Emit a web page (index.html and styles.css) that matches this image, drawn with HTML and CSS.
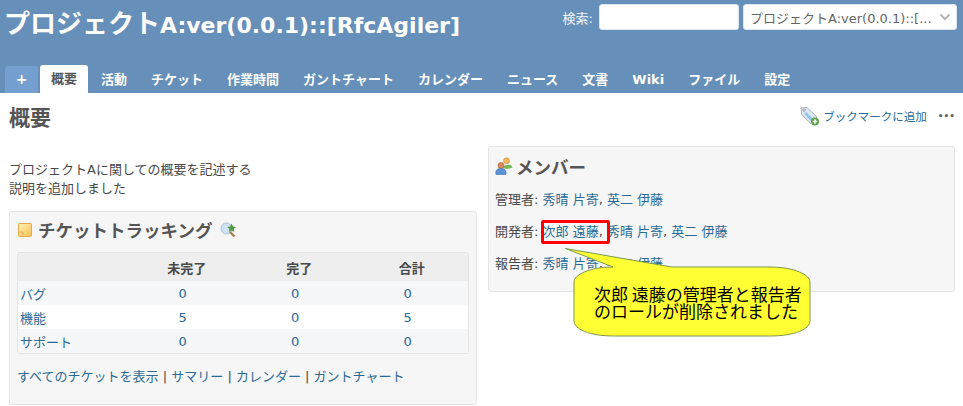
FILE: index.html
```html
<!DOCTYPE html>
<html>
<head>
<meta charset="utf-8">
<title>概要</title>
<link rel="stylesheet" href="styles.css">
</head>
<body>

<div class="header">
  <div class="top-row">
    <h1 class="title">プロジェクト<span class="title-latin">A:ver(0.0.1)::[RfcAgiler]</span></h1>
    <div class="search">
      <span class="search-label">検索:</span>
      <div class="search-input"></div>
      <div class="jump">
        <span class="jump-text">プロジェクトA:ver(0.0.1)::[...</span>
        <svg class="chevron" width="12" height="8" viewBox="0 0 12 8"><path d="M1.5 1.5 L6 6 L10.5 1.5" fill="none" stroke="#b5b5b5" stroke-width="2"/></svg>
      </div>
    </div>
  </div>
  <div class="tabs">
    <a class="tab tab-new">+</a>
    <a class="tab selected">概要</a>
    <a class="tab">活動</a>
    <a class="tab">チケット</a>
    <a class="tab">作業時間</a>
    <a class="tab">ガントチャート</a>
    <a class="tab">カレンダー</a>
    <a class="tab">ニュース</a>
    <a class="tab">文書</a>
    <a class="tab">Wiki</a>
    <a class="tab">ファイル</a>
    <a class="tab">設定</a>
  </div>
</div>

<div class="content">
  <div class="content-head">
    <h2 class="page-title">概要</h2>
    <div class="contextual">
      <svg width="20" height="20" viewBox="0 0 20 20">
        <path d="M1 2 L7 1.5 L17 11 L10.5 17.5 L1.5 8 Z" fill="#dfe5ec" stroke="#a9b4c0"/>
        <path d="M6 6 L13 13 L11 15 L4.5 8 Z" fill="#8cc4f0"/>
        <circle cx="4" cy="4" r="1.2" fill="#fff" stroke="#99a"/>
        <circle cx="15" cy="15.5" r="4" fill="#5aa34a"/>
        <path d="M15 13.3 V17.7 M12.8 15.5 H17.2" stroke="#fff" stroke-width="1.4"/>
      </svg>
      <a class="link bookmark">ブックマークに追加</a>
      <span class="more">•••</span>
    </div>
  </div>

  <div class="columns">
    <div class="col-left">
      <div class="description">
        <p>プロジェクトAに関しての概要を記述する</p>
        <p>説明を追加しました</p>
      </div>

      <div class="box tracker-box">
        <h3 class="box-title">
          <svg width="14" height="14" viewBox="0 0 14 14">
            <defs><linearGradient id="tk" x1="0" y1="0" x2="1" y2="1"><stop offset="0" stop-color="#fff3b8"/><stop offset="1" stop-color="#f6c04e"/></linearGradient></defs>
            <rect x="0.5" y="0.5" width="13" height="13" rx="1" fill="url(#tk)" stroke="#eaa64a"/>
            <path d="M1.5 9 H5 V12.5" fill="none" stroke="#eaa64a"/>
          </svg>
          <span>チケットトラッキング</span>
          <svg class="zoom-icon" width="17" height="17" viewBox="0 0 17 17">
            <circle cx="6.5" cy="7.5" r="5.5" fill="#cfe2f5" stroke="#a8bfd6"/>
            <path d="M10 11 L14.5 15.5" stroke="#a58150" stroke-width="2.4"/>
            <path d="M11.5 2.5 L13 5.5 L16 6 L13.8 8 L14.4 11 L11.5 9.6 L8.8 11 L9.4 8 L7.2 6 L10.2 5.5 Z" fill="#4f9a3f"/>
          </svg>
        </h3>
        <table class="tracker-table">
          <thead>
            <tr><th></th><th>未完了</th><th>完了</th><th>合計</th></tr>
          </thead>
          <tbody>
            <tr class="odd"><td class="name"><a class="link">バグ</a></td><td><a class="link">0</a></td><td><a class="link">0</a></td><td><a class="link">0</a></td></tr>
            <tr><td class="name"><a class="link">機能</a></td><td><a class="link">5</a></td><td><a class="link">0</a></td><td><a class="link">5</a></td></tr>
            <tr class="odd"><td class="name"><a class="link">サポート</a></td><td><a class="link">0</a></td><td><a class="link">0</a></td><td><a class="link">0</a></td></tr>
          </tbody>
        </table>
        <p class="tracker-links">
          <a class="link">すべてのチケットを表示</a> | <a class="link">サマリー</a> | <a class="link">カレンダー</a> | <a class="link">ガントチャート</a>
        </p>
      </div>
    </div>

    <div class="col-right">
      <div class="box members-box">
        <h3 class="box-title">
          <svg class="members-icon" width="18" height="18" viewBox="0 0 18 18">
            <circle cx="11.5" cy="3.8" r="3" fill="#f4b860" stroke="#c98a30" stroke-width="0.6"/>
            <path d="M8 11 C8 7.5 15 7 16.5 8.5 L17.5 10.5 L12 12 Z" fill="#78b85c"/>
            <circle cx="6" cy="8.5" r="3" fill="#d98a5c" stroke="#a85f38" stroke-width="0.6"/>
            <path d="M1 17.5 C0 12.5 3 11.5 6 11.5 C9 11.5 11.5 12.5 11 17.5 Z" fill="#5b93d6" stroke="#3f6fa8" stroke-width="0.6"/>
          </svg>
          <span>メンバー</span>
        </h3>
        <p class="role">管理者: <a class="link">秀晴 片寄</a>, <a class="link">英二 伊藤</a></p>
        <p class="role">開発者: <a class="link">次郎 遠藤</a>, <a class="link">秀晴 片寄</a>, <a class="link">英二 伊藤</a></p>
        <p class="role">報告者: <a class="link">秀晴 片寄</a>, <a class="link">英二 伊藤</a></p>
      </div>
    </div>
  </div>
</div>

<!-- annotation drawn on top of the screenshot -->
<div class="red-box"></div>
<svg class="callout-shape" width="250" height="95" viewBox="0 0 250 95">
  <path d="M0.5 0.5 L107 19 H205 C230 19 245 27 245 34 V73 C245 81 230 88 205 88 H49 C24 88 9 81 9 73 V34 C9 27 24 19 48 19 Z" fill="#ffff33" stroke="#7d9a50" stroke-width="1"/>
</svg>
<div class="callout-text">次郎 遠藤の管理者と報告者<br>のロールが削除されました</div>

</body>
</html>
```

FILE: styles.css
```css
html, body {
  margin: 0;
  padding: 0;
}

body {
  position: relative;
  width: 963px;
  height: 406px;
  overflow: hidden;
  background: #fff;
  color: #484848;
  font-family: "DejaVu Sans", "Noto Sans CJK JP", sans-serif;
  font-size: 13px;
}

.link {
  color: #2a6a94;
}

/* header */
.header {
  height: 93px;
  background-color: #668fb9;
  display: flex;
  flex-direction: column;
  justify-content: space-between;
}

.top-row {
  display: flex;
  justify-content: space-between;
  padding: 4px 6px 0 4px;
}

.title {
  margin: 0;
  color: #fff;
  font-size: 26px;
  line-height: 40px;
  font-weight: bold;
  white-space: nowrap;
}

.title-latin {
  font-size: 22px;
}

.search {
  display: flex;
  align-items: center;
  height: 26px;
}

.search-label {
  color: #f2f6fa;
  margin-right: 6px;
}

.search-input {
  width: 138px;
  height: 24px;
  background: #fff;
  border: 1px solid #dfe6ee;
  border-radius: 3px;
  margin-right: 4px;
}

.jump {
  width: 201px;
  height: 24px;
  background: #fff;
  border: 1px solid #dfe6ee;
  border-radius: 3px;
  display: flex;
  align-items: center;
  justify-content: space-between;
  padding: 0 5px 0 6px;
  color: #666;
  white-space: nowrap;
}

.tabs {
  display: flex;
  align-items: flex-end;
  padding-left: 5px;
}

.tab {
  color: #fff;
  font-size: 13px;
  font-weight: bold;
  line-height: 26px;
  padding: 0 12px;
  white-space: nowrap;
}

.tab-new {
  width: 33px;
  box-sizing: border-box;
  padding: 0;
  text-align: center;
  background: #759fcf;
  border-radius: 3px 3px 0 0;
  margin-right: 2px;
  line-height: 27px;
  font-size: 14px;
}

.tab.selected {
  background: #fff;
  color: #555;
  border-radius: 3px 3px 0 0;
  line-height: 28px;
  padding: 0 11px;
  margin-right: 1px;
}

/* content */
.content {
  padding: 0 8px 0 9px;
}

.content-head {
  display: flex;
  justify-content: space-between;
  align-items: center;
  height: 46px;
}

.page-title {
  margin: 0;
  color: #555;
  font-size: 21px;
  font-weight: bold;
}

.contextual {
  display: flex;
  align-items: center;
  gap: 3px;
  font-size: 11.5px;
}

.more {
  color: #666;
  font-size: 9px;
  font-weight: bold;
  margin-left: 8px;
}

.columns {
  display: grid;
  grid-template-columns: 468px 467px;
  column-gap: 11px;
  margin-top: 7px;
}

.description {
  padding-top: 14px;
  height: 51px;
  line-height: 19px;
}

.description p {
  margin: 0;
}

.box {
  box-sizing: border-box;
  background: #f6f6f6;
  border: 1px solid #e4e4e4;
  border-radius: 3px;
  padding: 0 7px;
}

.tracker-box {
  height: 194px;
}

.members-box {
  height: 146px;
  padding: 0 6px;
}

.box-title {
  display: flex;
  align-items: center;
  margin: 0;
  height: 36px;
  color: #555;
  font-size: 17.5px;
  font-weight: bold;
}

.tracker-box .box-title {
  padding-left: 1px;
  gap: 6px;
  height: 35px;
}

.members-box .box-title {
  padding-top: 1px;
  gap: 3px;
  margin-bottom: 7px;
}

.zoom-icon {
  margin-left: 2px;
}

.tracker-table {
  width: 452px;
  margin-top: 5px;
  border-collapse: separate;
  border-spacing: 0;
  table-layout: fixed;
  border: 1px solid #e4e4e4;
  border-radius: 3px;
  background: #fff;
}

.tracker-table th {
  height: 28px;
  padding: 0;
  background: #eee;
  font-size: 13px;
  text-align: center;
  color: #484848;
}

.tracker-table td {
  height: 24px;
  padding: 0 8px 0 0;
  text-align: center;
}

.tracker-table td.name {
  padding: 0 0 0 2px;
  text-align: left;
}

.tracker-table tr.odd td {
  background: #f6f7f8;
}

.tracker-links {
  margin: 14px 0 0 0;
  line-height: 18px;
  white-space: nowrap;
}

.role {
  margin: 0 0 14px 0;
  line-height: 18px;
  white-space: nowrap;
}

/* annotation */
.red-box {
  position: absolute;
  left: 541px;
  top: 220px;
  width: 63px;
  height: 18px;
  border: 3px solid #f00;
  border-radius: 2px;
}

.callout-shape {
  position: absolute;
  left: 565px;
  top: 248px;
}

.callout-text {
  position: absolute;
  left: 594px;
  top: 285px;
  color: #000;
  font-family: "Noto Sans CJK JP", sans-serif;
  font-size: 17px;
  line-height: 17px;
  white-space: nowrap;
}
```
